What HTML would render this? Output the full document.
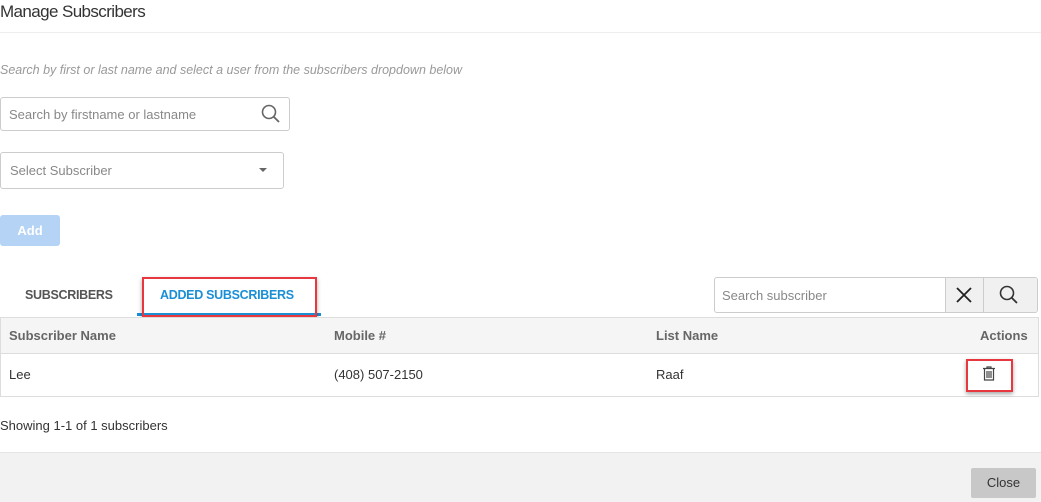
<!DOCTYPE html>
<html><head><style>
*{box-sizing:border-box;margin:0;padding:0}
body{width:1041px;height:502px;background:#fff;font-family:"Liberation Sans",sans-serif;position:relative;overflow:hidden;color:#333}
.a{position:absolute}
</style></head><body>
<div class="a" style="left:0;top:2px;font-size:17px;color:#333;letter-spacing:-0.6px">Manage Subscribers</div>
<div class="a" style="left:0;top:32px;width:1041px;height:1px;background:#eee"></div>
<div class="a" style="left:0;top:63px;font-size:12.5px;font-style:italic;color:#999">Search by first or last name and select a user from the subscribers dropdown below</div>
<div class="a" style="left:0;top:97px;width:290px;height:34px;border:1px solid #ccc;border-radius:3px"></div>
<div class="a" style="left:9px;top:107px;font-size:13px;color:#888">Search by firstname or lastname</div>
<svg class="a" style="left:260px;top:103px" width="22" height="22" viewBox="0 0 22 22"><circle cx="9" cy="9" r="6.5" fill="none" stroke="#666" stroke-width="1.6"/><path d="M13.7 13.7L19 19" stroke="#666" stroke-width="1.8"/></svg>
<div class="a" style="left:0;top:152px;width:284px;height:37px;border:1px solid #ccc;border-radius:3px"></div>
<div class="a" style="left:10px;top:163px;font-size:13px;color:#888">Select Subscriber</div>
<div class="a" style="left:259px;top:168px;border-left:4px solid transparent;border-right:4px solid transparent;border-top:4px solid #666"></div>
<div class="a" style="left:0;top:215px;width:60px;height:31px;background:#b5d3f5;border-radius:3px;color:#fff;font-size:13px;font-weight:bold;line-height:31px;text-align:center">Add</div>
<div class="a" style="left:25px;top:288px;font-size:12.5px;color:#555;font-weight:bold;letter-spacing:-0.3px">SUBSCRIBERS</div>
<div class="a" style="left:160px;top:288px;font-size:12.5px;color:#1a8fd6;font-weight:bold;letter-spacing:-0.3px">ADDED SUBSCRIBERS</div>
<div class="a" style="left:137px;top:313px;width:184px;height:3px;background:#1a8fd6"></div>
<div class="a" style="left:142px;top:277px;width:175px;height:40px;border:2.5px solid #e8383f;box-shadow:0 2px 4px rgba(0,0,0,.35)"></div>
<div class="a" style="left:714px;top:277px;width:324px;height:36px;border:1px solid #ccc;border-radius:3px;overflow:hidden">
<div class="a" style="left:230px;top:0;width:94px;height:36px;background:#f0f0f0;border-left:1px solid #ccc"></div>
<div class="a" style="left:268px;top:0;width:1px;height:36px;background:#ccc"></div></div>
<div class="a" style="left:722px;top:288px;font-size:13px;color:#888">Search subscriber</div>
<svg class="a" style="left:955px;top:286px" width="18" height="18"><path d="M2 2L16 16M16 2L2 16" stroke="#222" stroke-width="1.8"/></svg>
<svg class="a" style="left:998px;top:284px" width="22" height="22" viewBox="0 0 22 22"><circle cx="9" cy="9" r="6.5" fill="none" stroke="#333" stroke-width="1.6"/><path d="M13.7 13.7L19 19" stroke="#333" stroke-width="1.8"/></svg>
<div class="a" style="left:0;top:317px;width:1039px;height:80px;border:1px solid #ddd"></div>
<div class="a" style="left:1px;top:318px;width:1037px;height:36px;background:#f5f5f5;border-bottom:1px solid #ddd"></div>
<div class="a" style="left:9px;top:328px;font-size:13px;color:#666;font-weight:bold">Subscriber Name</div>
<div class="a" style="left:334px;top:328px;font-size:13px;color:#666;font-weight:bold">Mobile #</div>
<div class="a" style="left:656px;top:328px;font-size:13px;color:#666;font-weight:bold">List Name</div>
<div class="a" style="left:980px;top:328px;font-size:13px;color:#666;font-weight:bold">Actions</div>
<div class="a" style="left:9px;top:367px;font-size:13px;color:#333">Lee</div>
<div class="a" style="left:334px;top:367px;font-size:13px;color:#333">(408) 507-2150</div>
<div class="a" style="left:656px;top:367px;font-size:13px;color:#333">Raaf</div>
<svg class="a" style="left:982px;top:366px" width="14" height="15" viewBox="0 0 14 15"><path d="M1 2.5H13M5 2.5V1H9V2.5M2.5 3V14H11.5V3M5 5V12M7 5V12M9 5V12" fill="none" stroke="#444" stroke-width="1.2"/></svg>
<div class="a" style="left:966px;top:359px;width:47px;height:33px;border:2.5px solid #e8383f;box-shadow:0 2px 4px rgba(0,0,0,.35)"></div>
<div class="a" style="left:0;top:418px;font-size:13px;color:#333">Showing 1-1 of 1 subscribers</div>
<div class="a" style="left:0;top:452px;width:1041px;height:50px;background:#f2f2f2;border-top:1px solid #e5e5e5"></div>
<div class="a" style="left:971px;top:468px;width:65px;height:30px;background:#c8c8c8;border-radius:2px;font-size:13px;color:#333;line-height:30px;text-align:center">Close</div>
</body></html>
